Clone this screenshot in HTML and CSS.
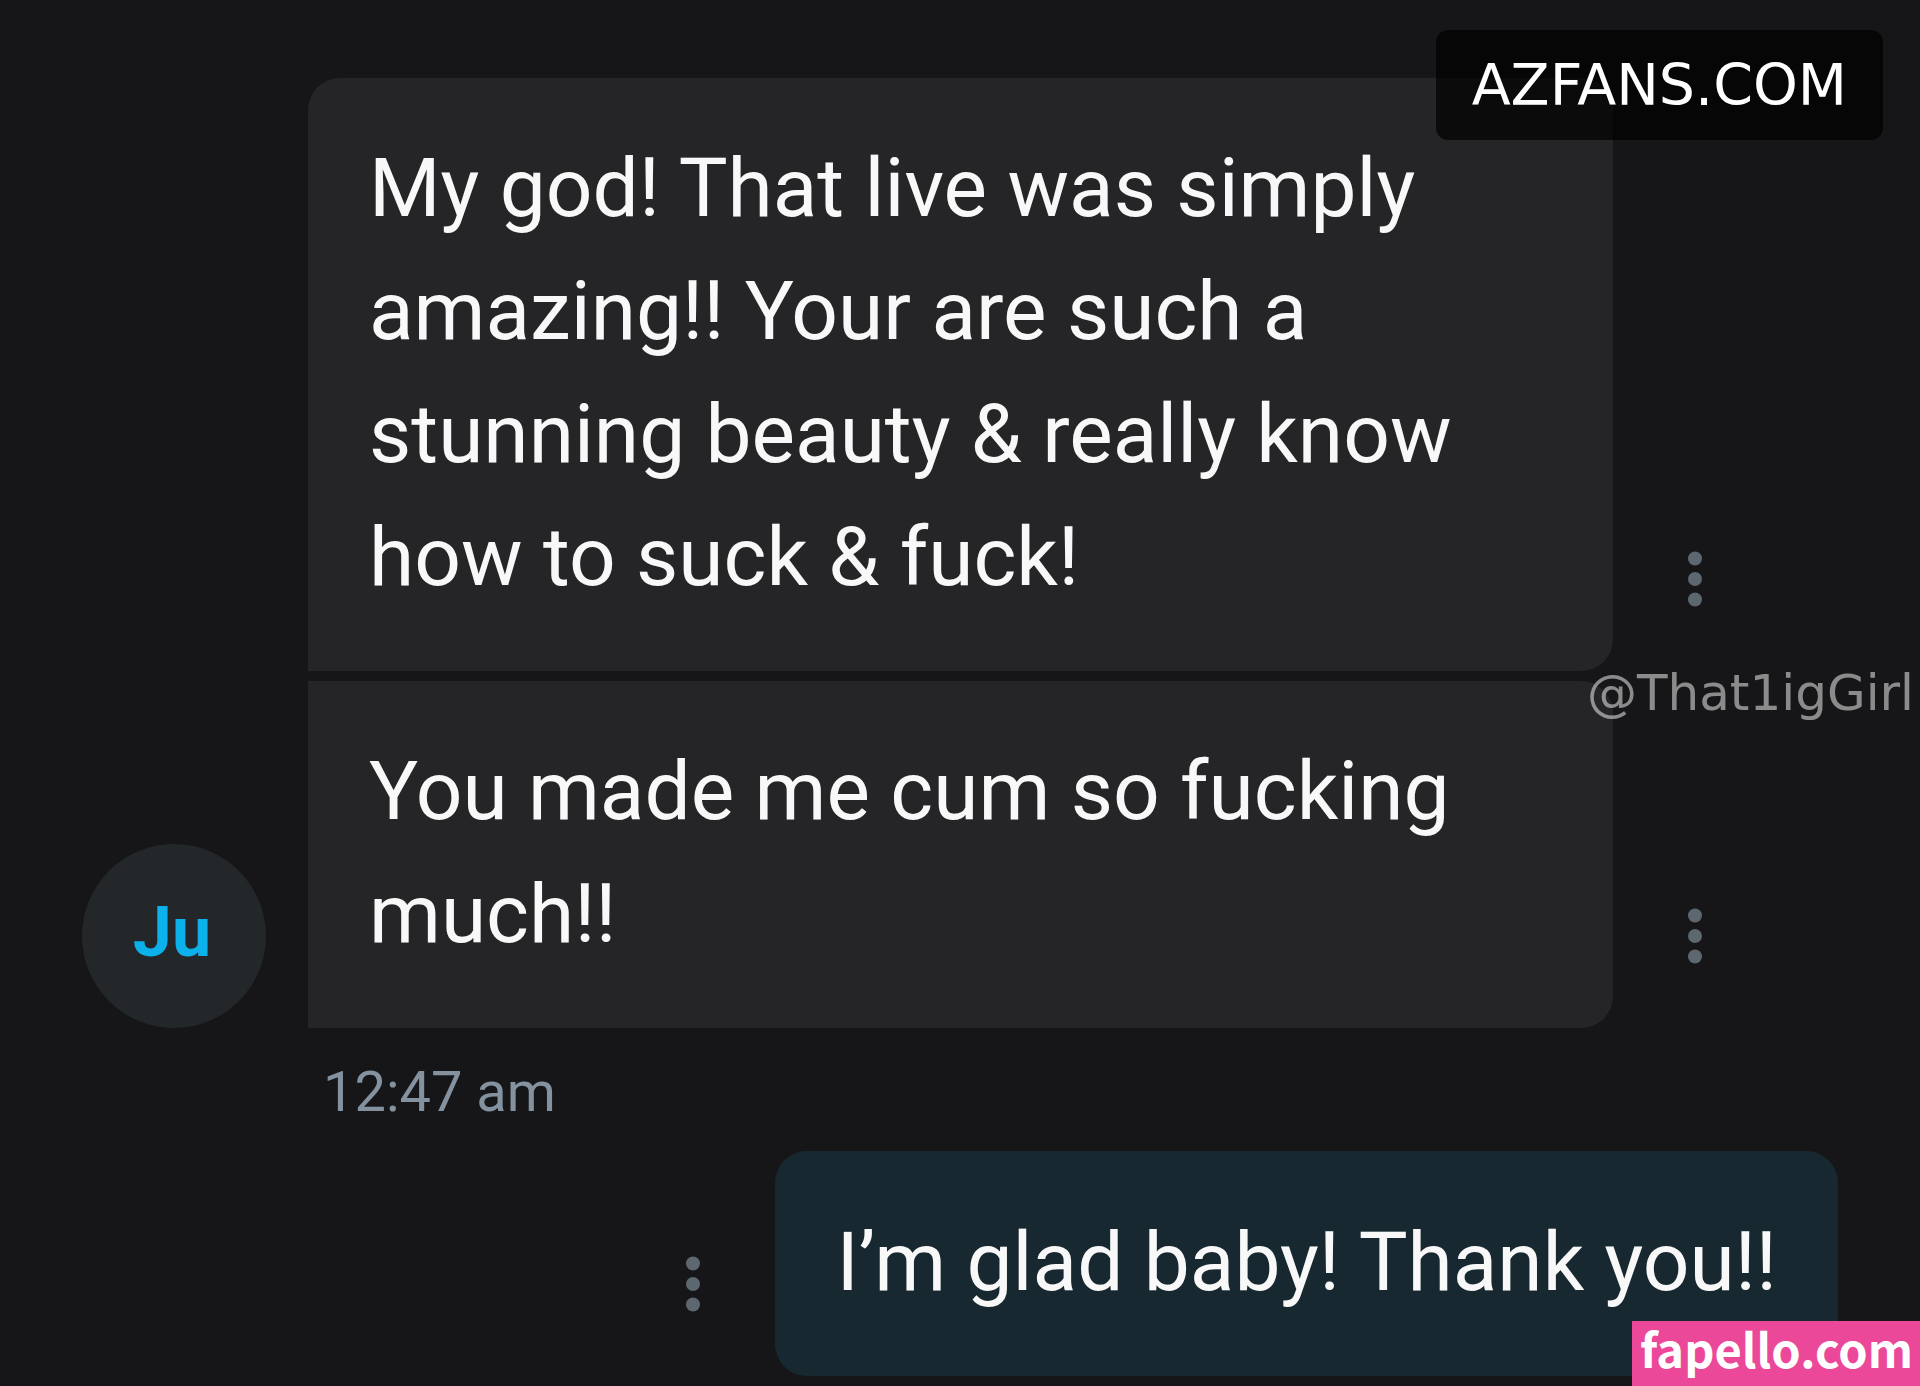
FILE: index.html
```html
<!DOCTYPE html>
<html lang="en">
<head>
  <meta charset="UTF-8">
  <meta name="viewport" content="width=device-width, initial-scale=1.0">
  <title>Chat</title>
  <link rel="stylesheet" href="styles.css">
</head>
<body>
  <main class="chat">
    <section class="group">
      <div class="avatar">Ju</div>
      <div class="messages">
        <div class="message">
          <p class="bubble first">My god! That live was simply amazing!! Your are such a stunning beauty &amp; really know how to suck &amp; fuck!</p>
          <button class="menu" type="button" aria-label="Message options">
            <svg width="14" height="56" viewBox="0 0 14 56"><circle cx="7" cy="7.5" r="7"/><circle cx="7" cy="28" r="7"/><circle cx="7" cy="48.5" r="7"/></svg>
          </button>
        </div>
        <div class="message">
          <p class="bubble">You made me cum so fucking much!!</p>
          <button class="menu" type="button" aria-label="Message options">
            <svg width="14" height="56" viewBox="0 0 14 56"><circle cx="7" cy="7.5" r="7"/><circle cx="7" cy="28" r="7"/><circle cx="7" cy="48.5" r="7"/></svg>
          </button>
        </div>
      </div>
    </section>
    <time class="time">12:47 am</time>
    <section class="message own">
      <button class="menu" type="button" aria-label="Message options">
        <svg width="14" height="56" viewBox="0 0 14 56"><circle cx="7" cy="7.5" r="7"/><circle cx="7" cy="28" r="7"/><circle cx="7" cy="48.5" r="7"/></svg>
      </button>
      <p class="bubble">I’m glad baby! Thank you!!</p>
    </section>

    <div class="site">AZFANS.COM</div>
    <div class="handle">@That1igGirl</div>
    <div class="badge">fapello.com</div>
  </main>
</body>
</html>
```

FILE: styles.css
```css
* {
  box-sizing: border-box;
}

body {
  margin: 0;
  background: #161618;
  font-family: Roboto, "Liberation Sans", sans-serif;
}

.chat {
  position: relative;
  padding: 78px 82px 10px;
}

.group {
  display: flex;
  align-items: flex-end;
  gap: 42px;
}

.avatar {
  display: flex;
  flex: none;
  align-items: center;
  justify-content: center;
  width: 184px;
  height: 184px;
  padding: 0 4px 8px 0;
  border-radius: 50%;
  background: #232729;
  color: #0cb0ea;
  font-size: 70px;
  font-weight: 700;
}

.messages {
  display: flex;
  flex: 1;
  flex-direction: column;
  gap: 10px;
}

.message {
  display: flex;
  align-items: flex-end;
}

.bubble {
  flex: 0 1 1305px;
  margin: 0;
  padding: 49px 61px 52px;
  border-radius: 0 32px 32px 0;
  background: #252528;
  color: #f8f8f8;
  font-size: 82px;
  line-height: 123px;
}

.bubble.first {
  border-radius: 32px 32px 32px 0;
}

.menu {
  display: flex;
  flex: none;
  align-items: center;
  justify-content: center;
  width: 164px;
  height: 184px;
  padding: 0;
  border: 0;
  background: none;
  cursor: pointer;
}

.menu svg {
  fill: #5d6770;
}

.time {
  display: block;
  margin: 22px 241px 17px;
  color: #84919f;
  font-size: 56px;
  line-height: 84px;
}

.own {
  justify-content: flex-end;
}

.own .bubble {
  flex: none;
  padding: 50px 61px 52px;
  border-radius: 32px;
  background: #172830;
}

/* labels lying over the chat */
.site {
  position: absolute;
  top: 30px;
  right: 37px;
  padding: 0 36px;
  border-radius: 12px;
  background: rgba(0, 0, 0, 0.7);
  color: #fff;
  font: 57px/110px "DejaVu Sans", sans-serif;
}

.handle {
  position: absolute;
  top: 661px;
  right: 6px;
  color: rgba(255, 255, 255, 0.5);
  font: 50px/64px "DejaVu Sans", sans-serif;
}

.badge {
  position: absolute;
  right: 0;
  bottom: 0;
  padding: 0 7px 12px 8px;
  background: #ec4899;
  color: #fff;
  font: 700 47px/53px "Noto Sans CJK SC", sans-serif;
}
```
